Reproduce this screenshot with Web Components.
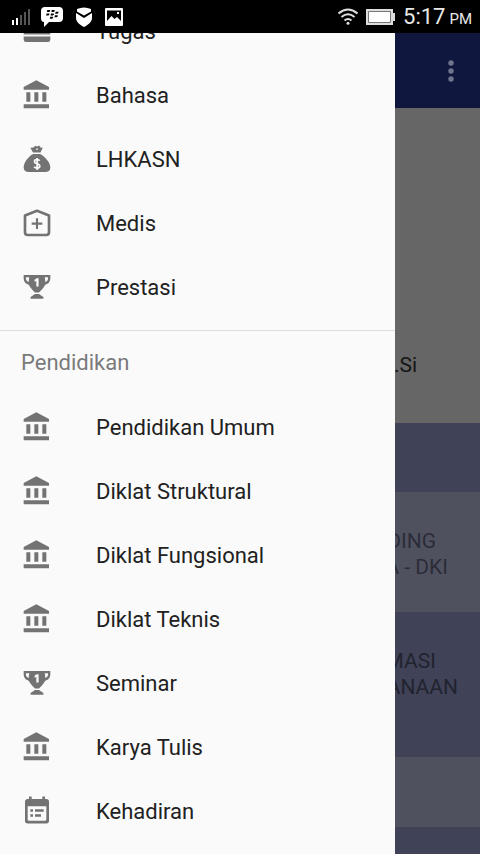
<!DOCTYPE html>
<html lang="id">
<head>
<meta charset="utf-8">
<meta name="viewport" content="width=device-width, initial-scale=1">
<title>Menu</title>
<style>
  html, body { height: 100%; margin: 0; overflow: hidden; }
  body { font-family: Roboto, "Liberation Sans", sans-serif; font-size: 22px; background: #666; color: #212121; }
</style>
</head>
<body>
<phone-screen>
  <status-bar slot="status" time="5:17" period="PM"></status-bar>
  <profile-page slot="page">
    <app-toolbar></app-toolbar>
    <profile-header>.Si</profile-header>
    <page-band tone="dark" style="--h:69px"></page-band>
    <page-band tone="light" style="--h:120px">
      <text-line style="--end:44px">DING</text-line>
      <text-line style="--end:32px">A - DKI</text-line>
    </page-band>
    <page-band tone="dark" style="--h:145px">
      <text-line style="--end:44px">MASI</text-line>
      <text-line style="--end:22px">ANAAN</text-line>
    </page-band>
    <page-band tone="light" style="--h:70px"></page-band>
    <page-band tone="dark" style="--h:69px"></page-band>
  </profile-page>
  <nav-drawer slot="drawer">
    <nav-item icon="card">Tugas</nav-item>
    <nav-item icon="bank">Bahasa</nav-item>
    <nav-item icon="sack">LHKASN</nav-item>
    <nav-item icon="medical">Medis</nav-item>
    <nav-item icon="trophy">Prestasi</nav-item>
    <nav-heading>Pendidikan</nav-heading>
    <nav-item icon="bank">Pendidikan Umum</nav-item>
    <nav-item icon="bank">Diklat Struktural</nav-item>
    <nav-item icon="bank">Diklat Fungsional</nav-item>
    <nav-item icon="bank">Diklat Teknis</nav-item>
    <nav-item icon="trophy">Seminar</nav-item>
    <nav-item icon="bank">Karya Tulis</nav-item>
    <nav-item icon="calendar">Kehadiran</nav-item>
  </nav-drawer>
</phone-screen>
<script>
  const define = (name, render) => customElements.define(name, class extends HTMLElement {
    constructor() {
      super();
      this.attachShadow({ mode: 'open' });
    }
    connectedCallback() {
      this.shadowRoot.innerHTML = render(this);
    }
  });

  const icons = {
    card: '<path fill-rule="evenodd" d="M4 4H20Q22 4 22 6V18.500Q22 20.300 20.200 20.300H3.800Q2 20.300 2 18.500V6Q2 4 4 4ZM2 14.600V16.200H22V14.600Z"/>',
    bank: '<path d="M11.500 1L2 6V8H21V6ZM16 10V17H19V10ZM2 19V22H21V19ZM10 10V17H13V10ZM4 10V17H7V10Z"/>',
    sack: '<path d="M7 3.500L9.400 3.400 10.700 2 12 2.700 13.600 1.800 14.600 3.300 16.300 3.500 14.600 7.200H9Z"/><path d="M9 8.200H14.400C18.500 10.700 22 14.700 22 18.400C22 20.700 20.500 21.800 18 21.800H6C3.500 21.800 2 20.700 2 18.400C2 14.700 5 10.700 9 8.200Z"/><path fill="none" stroke="#fafafa" stroke-width="1.300" d="M14 13.300C13.200 12.100 10.100 12.100 10.100 14C10.100 16 14.100 15.100 14.100 17.300C14.100 19.300 10.800 19.200 9.900 17.900M12.100 11.300V20.200"/><circle cx="12" cy="4.600" r=".6" fill="#fafafa"/>',
    medical: '<path fill="none" stroke="currentColor" stroke-width="2" stroke-linejoin="round" d="M3 6.300L12 2.800L21 6.300V19Q21 21 19 21H5Q3 21 3 19Z"/><path d="M11.200 8.500H12.800V11.700H16V13.300H12.800V16.500H11.200V13.300H8V11.700H11.200Z"/>',
    trophy: '<path fill-rule="evenodd" d="M2 3H22V5C22 8 20.500 9.500 18.200 10.300C16.800 13 14.500 15 13.500 16.200H10.500C9.500 15 7.200 13 5.800 10.300C3.500 9.500 2 8 2 5ZM3.700 4.700C3.500 6.500 4.200 7.700 5.700 8.200L6.200 4.700ZM20.300 4.700H17.800L18.300 8.200C19.800 7.700 20.500 6.500 20.300 4.700ZM11.700 5.500L10.200 6.500V8L11.500 7.500V11.600H13.200V5.500Z"/><path d="M10.500 17.300H13.500L16.800 19.500V20.900H7.200V19.500Z"/>',
    calendar: '<path fill-rule="evenodd" d="M6 1.200H8V3H16V1.200H18V3H19Q21 3 21 5V19.300Q21 21.300 19 21.300H5Q3 21.300 3 19.300V5Q3 3 5 3H6ZM5 8.500V18.300Q5 19.300 6 19.300H18Q19 19.300 19 18.300V8.500Z"/><path d="M7 10.700H9V12.500H7ZM10.500 10.700H17V12.500H10.500ZM7 14.500H9V16.300H7ZM10.500 14.500H15V16.300H10.500Z"/>'
  };

  define('phone-screen', () => `
    <style>
      :host { display: grid; grid-template-rows: auto minmax(0, 1fr); height: 100vh; }
      main { display: grid; overflow: hidden; }
      ::slotted([slot=page]), ::slotted([slot=drawer]) { grid-area: 1 / 1; min-height: 0; }
      ::slotted([slot=drawer]) { z-index: 1; }
    </style>
    <slot name="status"></slot>
    <main><slot name="page"></slot><slot name="drawer"></slot></main>`);

  define('status-bar', el => `
    <style>
      :host { display: flex; align-items: center; justify-content: space-between; height: 33px; padding: 0 8px 0 11px; background: #000; color: #e8e8e8; box-sizing: border-box; }
      div { display: flex; align-items: center; }
      svg { display: block; }
      .left { gap: 11px; }
      .right { gap: 8px; }
      .clock { display: flex; align-items: baseline; gap: 4px; font-size: 22px; line-height: 33px; padding-top: 2px; }
      small { font-size: 15px; }
    </style>
    <div class="left">
      <svg width="19" height="18" viewBox="0 0 19 18" aria-hidden="true"><path fill="#fff" d="M1 12h2v5H1zM5 10h2v7H5z"/><path fill="#555" d="M9 7h2v10H9zM13 4h2v13h-2zM17 1h2v16h-2z"/></svg>
      <svg width="22" height="21" viewBox="0 0 22 21" aria-hidden="true"><path fill="#fff" d="M4 1H18Q22 1 22 5V12Q22 16 18 16H8L3 21V16Q0 16 0 12V5Q0 1 4 1Z"/><path fill="#000" d="M6.300 4h2.700q1 1-.8 2H5.900zM10.800 4h2.700q1 1-.8 2h-2.300zM5.500 7.400h2.700q1 1-.8 2H5.100zM10 7.400h2.700q1 1-.8 2H9.600zM14.600 5.800h2.700q1 1-.8 2h-2.300zM13.900 9.200h2.700q1 1-.8 2h-2.300zM9.200 10.800h2.700q1 1-.8 2H8.800z"/></svg>
      <svg width="20" height="20" viewBox="0 0 20 20" aria-hidden="true"><path fill="#fff" d="M3 2Q10-1 17 2V4.500L10 8.500L3 4.500ZM2 6L10 11L18 6V11C18 15 14 18 10 20C6 18 2 15 2 11Z"/></svg>
      <svg width="19" height="18" viewBox="0 0 19 18" aria-hidden="true"><path fill="#fff" fill-rule="evenodd" d="M2 0H17Q18 0 18 1V17Q18 18 17 18H1Q0 18 0 17V1Q0 0 1 0ZM2 2.500V13L6.500 8L9.500 11L12 9L16 13V2.500ZM12 4h2v2h-2z"/></svg>
    </div>
    <div class="right">
      <svg width="20" height="17" viewBox="0 0 20 17" aria-hidden="true" fill="none" stroke="#ddd" stroke-width="2"><path d="M.5 5.500Q10-2.500 19.500 5.500M3.500 9Q10 3.500 16.500 9M6.500 12.500Q10 9.500 13.500 12.500"/><circle cx="10" cy="15.300" r="1.500" fill="#ddd" stroke="none"/></svg>
      <svg width="29" height="16" viewBox="0 0 29 16" aria-hidden="true"><path fill="#ddd" d="M0 0H27V4H29V12H27V16H0Z"/><path fill="#fff" stroke="#777" d="M2.500 2.500H24.500V13.500H2.500Z"/></svg>
      <span class="clock">${el.getAttribute('time')}<small>${el.getAttribute('period')}</small></span>
    </div>`);

  define('profile-page', () => `
    <style>:host { display: flex; flex-direction: column; overflow: hidden; background: #666; }</style>
    <slot></slot>`);

  define('app-toolbar', () => `
    <style>
      :host { display: flex; flex: none; align-items: center; justify-content: flex-end; height: 75px; padding-right: 13px; background: #10173e; }
      button { display: grid; place-items: center; width: 32px; height: 48px; padding: 0; border: 0; background: none; color: #70758d; }
    </style>
    <button type="button" aria-label="Opsi lainnya"><svg width="6" height="22" viewBox="0 0 6 22" fill="currentColor"><circle cx="3" cy="3" r="2.700"/><circle cx="3" cy="11" r="2.700"/><circle cx="3" cy="19" r="2.700"/></svg></button>`);

  define('profile-header', () => `
    <style>:host { display: flex; flex: none; align-items: flex-end; justify-content: flex-end; box-sizing: border-box; height: 315px; padding: 0 63px 45px 0; font-size: 21px; line-height: 26px; color: #151515; }</style>
    <slot></slot>`);

  define('page-band', () => `
    <style>
      :host { display: block; flex: none; box-sizing: border-box; height: var(--h); padding-top: 36px; font-size: 21px; line-height: 26px; text-align: right; background: #404258; color: #21232f; }
      :host([tone=light]) { background: #50515f; color: #2b2c38; }
    </style>
    <slot></slot>`);

  define('text-line', () => `
    <style>:host { display: block; padding-right: var(--end); }</style>
    <slot></slot>`);

  define('nav-drawer', () => `
    <style>
      :host { display: block; width: calc(100% - 85px); overflow: hidden; background: #fafafa; }
      nav { margin-top: -34px; }
    </style>
    <nav><slot></slot></nav>`);

  define('nav-item', el => `
    <style>
      :host { display: block; }
      a { display: flex; align-items: center; gap: 43px; height: 64px; padding: 0 21px; color: #212121; text-decoration: none; }
      svg { flex: none; color: #737373; }
    </style>
    <a href="#"><svg width="32" height="32" viewBox="0 0 24 24" fill="currentColor" aria-hidden="true">${icons[el.getAttribute('icon')]}</svg><span><slot></slot></span></a>`);

  define('nav-heading', () => `
    <style>
      :host { display: block; margin-top: 11px; border-top: 1px solid #dedede; }
      h2 { margin: 0; padding: 0 21px; font-size: 22px; font-weight: 400; line-height: 64px; color: #7a7a7a; }
    </style>
    <h2><slot></slot></h2>`);
</script>
</body>
</html>
